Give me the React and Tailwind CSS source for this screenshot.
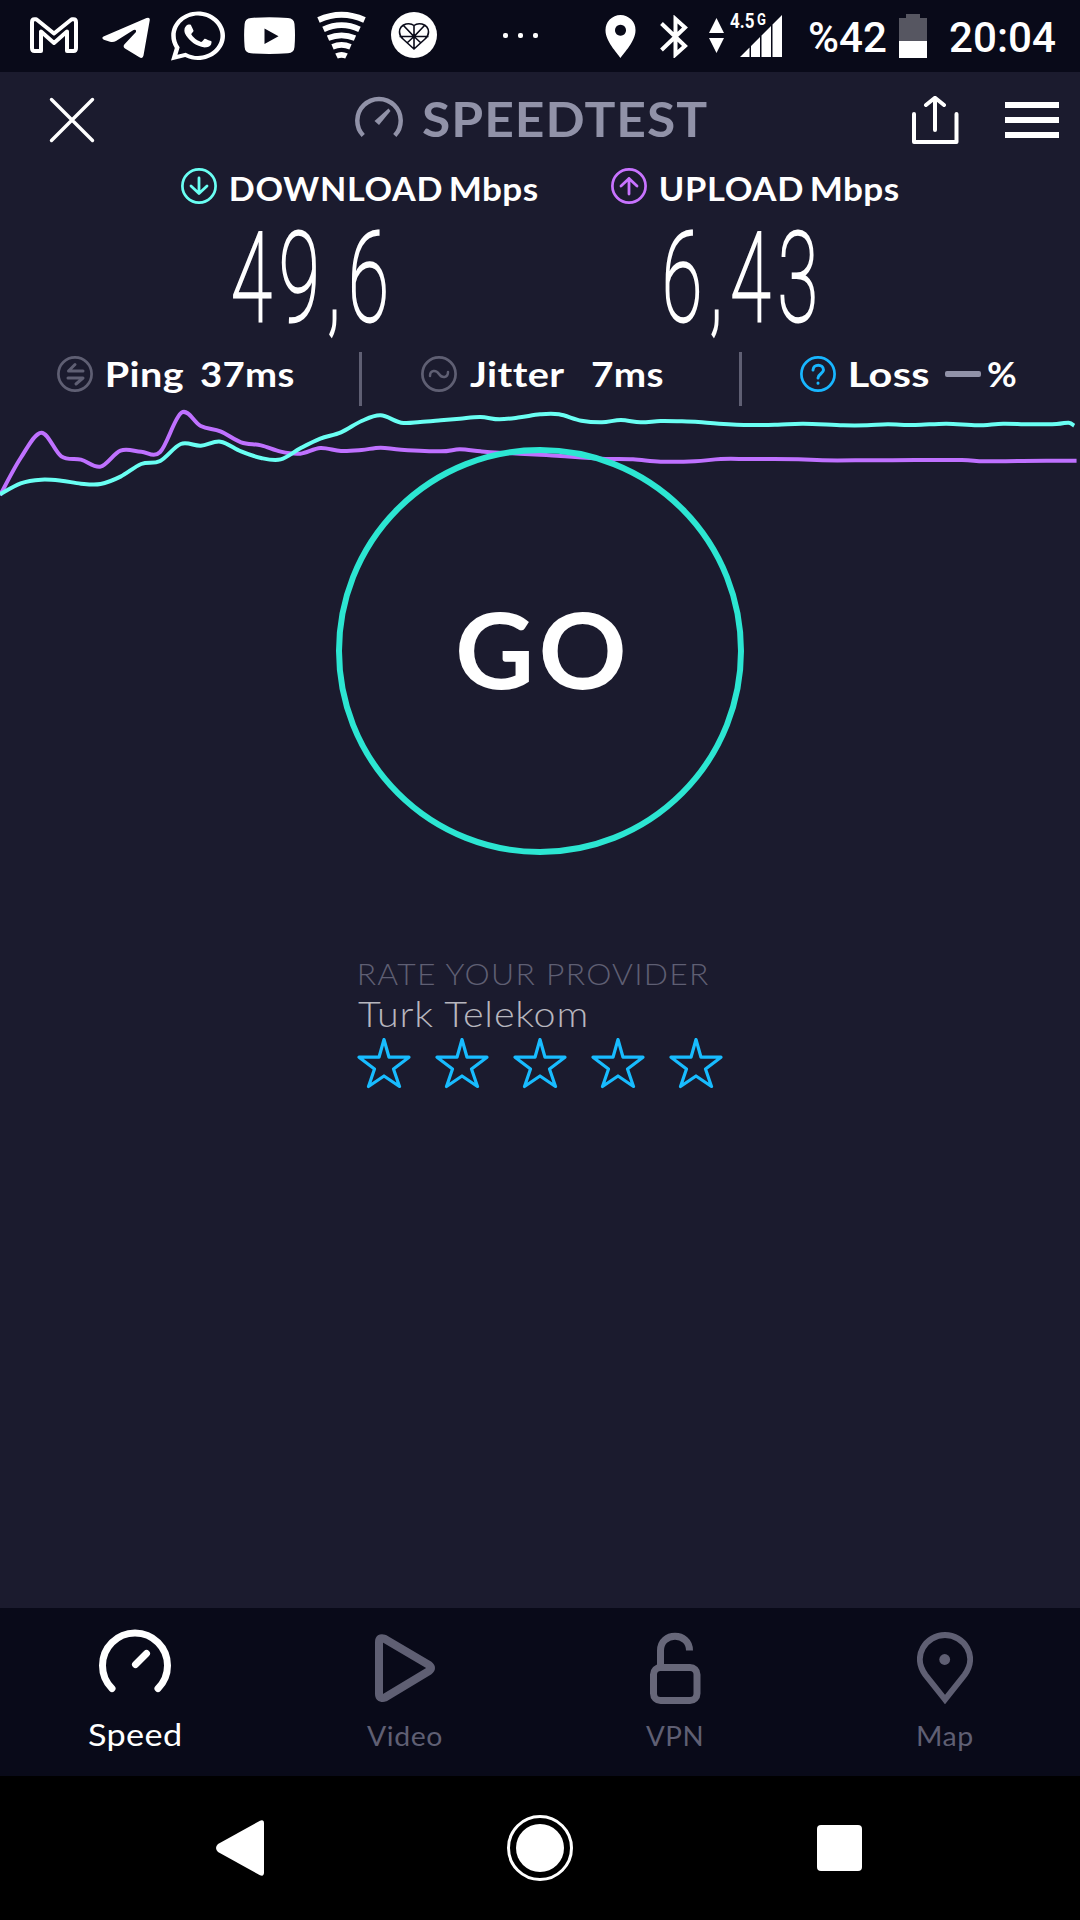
import React, { useLayoutEffect, useRef } from "react";
import { FaWhatsapp } from "react-icons/fa";

// Text whose ink fills its box: the box width sets the run length, the box bottom is the baseline.
function Label({ className = "", children }) {
  const box = useRef(null);
  const run = useRef(null);
  useLayoutEffect(() => {
    const cs = getComputedStyle(box.current);
    const ctx = document.createElement("canvas").getContext("2d");
    ctx.font = `${cs.fontWeight} ${cs.fontSize} ${cs.fontFamily}`;
    ctx.letterSpacing = cs.letterSpacing === "normal" ? "0px" : cs.letterSpacing;
    const m = ctx.measureText(run.current.textContent);
    const w = box.current.clientWidth;
    const h = box.current.clientHeight;
    const scale = w / (m.actualBoundingBoxRight + m.actualBoundingBoxLeft);
    const lineHeight = run.current.offsetHeight;
    const baseline = (lineHeight + m.fontBoundingBoxAscent - m.fontBoundingBoxDescent) / 2;
    run.current.style.transform = `translate(${m.actualBoundingBoxLeft * scale}px, ${h - baseline}px) scaleX(${scale})`;
  }, []);
  return (
    <div ref={box} className={`shrink-0 whitespace-pre ${className}`}>
      <span ref={run} className="block w-max origin-left leading-none">{children}</span>
    </div>
  );
}

function smooth(points) {
  let d = `M${points[0][0]} ${points[0][1]}`;
  for (let i = 0; i < points.length - 1; i++) {
    const a = points[i - 1] || points[i];
    const b = points[i];
    const c = points[i + 1];
    const e = points[i + 2] || c;
    d += ` C${b[0] + (c[0] - a[0]) / 6} ${b[1] + (c[1] - a[1]) / 6} ${c[0] - (e[0] - b[0]) / 6} ${c[1] - (e[1] - b[1]) / 6} ${c[0]} ${c[1]}`;
  }
  return d;
}

const upload = [
  [0, 466], [60, 354], [120, 278], [178, 349], [235, 359], [292, 380], [350, 332], [410, 335], [465, 336], [527, 218],
  [583, 258], [640, 274], [700, 307], [758, 316], [815, 335], [872, 341], [930, 324], [990, 333], [1050, 330], [1105, 323],
  [1165, 329], [1280, 334], [1335, 328], [1395, 334], [1450, 338], [1568, 344], [1628, 348], [1748, 356], [1838, 358],
  [1918, 365], [2018, 364], [2093, 357], [2178, 357], [2318, 358], [2388, 361], [2508, 361], [2658, 360], [2793, 360],
  [2858, 364], [2968, 363], [3126, 362],
];

const download = [
  [0, 463], [60, 430], [120, 419], [178, 422], [235, 431], [292, 432], [350, 410], [410, 372], [465, 363], [525, 312],
  [583, 317], [640, 305], [700, 334], [758, 354], [815, 358], [872, 325], [930, 296], [990, 277], [1050, 243], [1105, 226],
  [1165, 248], [1220, 246], [1280, 241], [1335, 236], [1395, 231], [1450, 238], [1510, 232], [1568, 223], [1623, 223],
  [1688, 242], [1748, 247], [1803, 240], [1860, 247], [1918, 243], [1978, 244], [2028, 246], [2088, 251], [2178, 255],
  [2258, 254], [2333, 251], [2448, 256], [2518, 256], [2578, 253], [2658, 255], [2748, 251], [2838, 256], [2913, 251],
  [2988, 253], [3068, 252], [3103, 248], [3119, 257],
];

function StatusBar() {
  return (
    <div className="flex h-[72px] items-start bg-[#090a19] pl-[30px] text-white">
      <svg className="mt-[17px] h-9 w-12" viewBox="0 0 48 36" fill="none" stroke="currentColor" strokeWidth="4" strokeLinejoin="round">
        <path d="M4.5 2.2h1.8L24 16.5 41.7 2.2h1.8q2.5 0 2.5 3V31q0 3-2.500 3H37V14.500L24 26 11 14.500V34H4.500Q2 34 2 31V5.200q0-3 2.500-3Z" />
      </svg>
      <svg className="mt-[17px] ml-6 h-[42px] w-12" viewBox="0 0 48 42" fill="currentColor">
        <path d="M1.500 19.500 44.500 1Q48.300-.3 47.700 3.500L41.500 38.500Q40.800 42.500 37 40L23 31.500Q20.500 29.700 22.500 27.300L34 15Q34.500 12 31.500 13L14 24Q11.500 25.500 8 24.800L1.800 22.800Q-1 21.200 1.500 19.500Z" />
      </svg>
      <FaWhatsapp className="mt-[8px] ml-[21px] h-[56px] w-[54px]" preserveAspectRatio="none" />
      <svg className="mt-[17px] ml-[19px] h-[37px] w-[51px]" viewBox="0 0 51 37" fill="currentColor">
        <path fillRule="evenodd" d="M7 1Q25-.6 44 1Q50 1.500 50.500 7Q51.500 18 50.500 30Q50 36 44 36.300Q25 37.600 7 36.300Q1 36 .6 30Q-.4 18 .6 7Q1 1.500 7 1ZM20.500 11.500V27L34.500 19.300Z" />
      </svg>
      <svg className="mt-[11px] ml-[22px] h-[49px] w-[49px]" viewBox="0 0 49 49" fill="none" stroke="currentColor" strokeWidth="5.800">
        <path d="M1.500 9Q24.500-1.500 47.500 9M6.500 18.300Q24.500 10 42.500 18.300M11 27.200Q24.500 21.500 38 27.200M15.500 35.800Q24.500 32 33.500 35.800M19.500 45Q24.500 42.600 29.500 45" />
      </svg>
      <svg className="mt-3 ml-[25px] h-[46px] w-[46px]" viewBox="0 0 46 46">
        <circle cx="23" cy="23" r="23" fill="currentColor" />
        <path d="M23 13.500Q26 11 31 12Q37.500 14 37.500 20Q37.500 24 34 27L23 37 12 27Q8.500 24 8.500 20Q8.500 14 15 12Q20 11 23 13.500ZV37M8.500 24.500H37.500M12.500 13.500 23 24.500 33.500 13.500M23 24.500 16 31M23 24.500 30 31" fill="none" stroke="#090a19" strokeWidth="1.600" />
      </svg>
      <div className="mt-[33px] ml-[66px] flex w-[35px] justify-between">
        <i className="size-[5px] rounded-[2px] bg-white" /><i className="size-[5px] rounded-[2px] bg-white" /><i className="size-[5px] rounded-[2px] bg-white" />
      </div>
      <svg className="mt-[15px] ml-[67px] h-[43px] w-[31px]" viewBox="0 0 31 43" fill="currentColor">
        <path fillRule="evenodd" d="M15.500 0A15 15 0 0 1 30.500 15.500C30.500 26 19 38 15.500 43C12 38 .5 26 .5 15.500A15 15 0 0 1 15.500 0ZM15.500 9.700a5.500 5.500 0 1 0 .01 0Z" />
      </svg>
      <svg className="mt-[15px] ml-6 h-[43px] w-7" viewBox="0 0 28 43" fill="none" stroke="currentColor" strokeWidth="4">
        <path d="M1.500 8.500 25 31 15.500 39.500V4L25 12.500 1.500 35" />
      </svg>
      <svg className="mt-[18px] ml-[21px] h-[35px] w-4" viewBox="0 0 16 35" fill="currentColor">
        <path d="M7.500 0 15 15H0ZM0 20H15L7.500 35Z" />
      </svg>
      <div className="relative mt-[15px] ml-[5px] h-[43px] w-[52px]">
        <svg className="ml-[10px] h-[42px] w-[42px]" viewBox="0 0 42 42" fill="currentColor">
          <path d="M0 42 9.500 32.500V42ZM11 31 20 22V42H11ZM21.500 20.500 31 11V42H21.500ZM32.500 9.500 42 0V42H32.500Z" />
        </svg>
        <div className="absolute -top-[1px] left-0 flex gap-[3px]">
          <Label className="h-[14px] w-[24px] font-[Roboto] text-[20px] font-bold">4.5</Label>
          <Label className="h-[11px] w-[9px] font-[Roboto] text-[16px] font-bold">G</Label>
        </div>
      </div>
      <Label className="mt-[22px] ml-7 h-[30px] w-[76px] font-[Roboto] text-[42px] font-medium">%42</Label>
      <svg className="mt-[14px] ml-[13px] h-11 w-7" viewBox="0 0 28 44">
        <path d="M7 0H21V4H28V27H0V4H7Z" fill="#565661" />
        <path d="M0 27H28V44H0Z" fill="#fff" />
      </svg>
      <Label className="mt-[22px] ml-[23px] h-[30px] w-[105px] font-[Roboto] text-[42px] font-medium">20:04</Label>
    </div>
  );
}

function Header() {
  return (
    <div className="flex h-[96px] items-start pl-[49px] text-white">
      <svg className="mt-[25px] h-[46px] w-[46px]" viewBox="0 0 46 46" stroke="currentColor" strokeWidth="3.400" strokeLinecap="round">
        <path d="M2.500 2.500 43.500 43.500M43.500 2.500 2.500 43.500" />
      </svg>
      <svg className="mt-6 ml-[260px] h-[42px] w-12" viewBox="0 0 48 42" fill="none" stroke="#9192a8" strokeWidth="4.500">
        <path d="M8.200 39.500A21.700 21.700 0 1 1 39.800 39.500" />
        <path d="M19.500 25 33.500 12.500 35.500 15 24 29Z" fill="#9192a8" stroke="none" />
      </svg>
      <Label className="mt-[31px] ml-5 h-[34px] w-[284px] text-[47px] font-bold tracking-[0.02em] text-[#9192a8]">SPEEDTEST</Label>
      <svg className="mt-6 ml-[205px] h-12 w-[48px]" viewBox="0 0 48 48" fill="none" stroke="currentColor" strokeWidth="4" strokeLinecap="round" strokeLinejoin="round">
        <path d="M2 18V46H44.500V18M23 34V2M14 9 23 1.800 32 9" />
      </svg>
      <div className="mt-[30px] ml-[45px] flex w-[54px] flex-col gap-[9px]">
        <i className="h-1.5 bg-white" /><i className="h-1.5 bg-white" /><i className="h-1.5 bg-white" />
      </div>
    </div>
  );
}

function Ring({ className, children }) {
  return (
    <svg className={`size-9 shrink-0 ${className}`} viewBox="0 0 36 36" fill="none" stroke="currentColor" strokeLinecap="round" strokeLinejoin="round">
      <circle cx="18" cy="18" r="16.600" strokeWidth="2.700" />
      {children}
    </svg>
  );
}

function Results() {
  return (
    <div className="h-[184px] text-white">
      <div className="flex h-[62px] items-start pl-[181px]">
        <Ring className="text-[#6afff3]"><path d="M18 10V25.500M10 18 18 25.500 26 18" strokeWidth="2.800" /></Ring>
        <Label className="mt-[9px] ml-[14px] h-[24px] w-[211px] text-[32px] font-bold tracking-[0.02em]">DOWNLOAD</Label>
        <Label className="mt-[9px] ml-[9px] h-[24px] w-[87px] text-[32px] font-bold tracking-[0.01em]">Mbps</Label>
        <Ring className="ml-[73px] text-[#c873ff]"><path d="M18 26V10.500M10 18 18 10.500 26 18" strokeWidth="2.800" /></Ring>
        <Label className="mt-[9px] ml-[14px] h-[24px] w-[142px] text-[32px] font-bold tracking-[0.02em]">UPLOAD</Label>
        <Label className="mt-[9px] ml-[9px] h-[24px] w-[87px] text-[32px] font-bold tracking-[0.01em]">Mbps</Label>
      </div>
      <div className="flex items-start pl-[234px]">
        <Label className="mt-px h-[90px] w-[151px] font-[Roboto] text-[125px] font-thin tracking-[0.1em] [-webkit-text-stroke:3px_white]">49,6</Label>
        <Label className="mt-px ml-[281px] h-[90px] w-[148px] font-[Roboto] text-[125px] font-thin tracking-[0.1em] [-webkit-text-stroke:3px_white]">6,43</Label>
      </div>
    </div>
  );
}

function Stats() {
  const text = "mt-[10px] h-[25px] text-[35px] font-bold tracking-[0.01em] [font-variant-ligatures:none]";
  return (
    <div className="flex h-[54px] items-start pl-[57px] text-white">
      <Ring className="mt-1 text-[#5f5f73]"><path d="M26 15H11.500L18 8.500M11 22H26L19 28" strokeWidth="3" /></Ring>
      <Label className={`${text} ml-[14px] w-[76px]`}>Ping</Label>
      <Label className={`${text} ml-[18px] w-[93px]`}>37ms</Label>
      <i className="ml-[65px] h-[54px] w-[3px] bg-[#5f5f73]" />
      <Ring className="mt-1 ml-[59px] text-[#5f5f73]"><path d="M9 20C9 14 15 13.500 18 18S27 22 27 16" strokeWidth="2.500" /></Ring>
      <Label className={`${text} ml-[13px] w-[94px]`}>Jitter</Label>
      <Label className={`${text} ml-[28px] w-[71px]`}>7ms</Label>
      <i className="ml-[76px] h-[54px] w-[3px] bg-[#5f5f73]" />
      <Ring className="mt-1 ml-[58px] text-[#18b6ff]"><path d="M13 14C13 7.500 23.500 7.500 23.500 14C23.500 17.500 18 18 18 22M18 27V27.200" strokeWidth="3" /></Ring>
      <Label className={`${text} ml-[14px] w-[79px]`}>Loss</Label>
      <i className="mt-[19px] ml-4 h-1.5 w-9 rounded-[2px] bg-[#9192a8]" />
      <Label className={`${text} ml-[7px] w-[28px]`}>%</Label>
    </div>
  );
}

function Rating() {
  return (
    <div className="mt-[109px] ml-[357px]">
      <Label className="ml-[3px] h-[21px] w-[350px] text-[29px] font-light tracking-[0.04em] text-[#5f5f73]">RATE YOUR PROVIDER</Label>
      <Label className="mt-[17px] ml-px h-[25px] w-[229px] text-[35px] font-light tracking-[0.02em] text-[#b7b6be]">Turk Telekom</Label>
      <div className="mt-[11px] flex gap-6">
        {[0, 1, 2, 3, 4].map((i) => (
          <svg key={i} className="h-[51px] w-[54px]" viewBox="0 0 54 51" fill="none" stroke="#18bcff" strokeWidth="3.200" strokeLinejoin="round">
            <path d="M27 1.500 32 19.200H52L36.500 31 42.500 48.500 27 38 11.500 48.500 17.500 31 2 19.200H22Z" />
          </svg>
        ))}
      </div>
    </div>
  );
}

function TabBar() {
  return (
    <div className="grid h-[168px] grid-cols-4 bg-[#090a19] text-[#5f5f73]">
      <div className="flex flex-col items-center pt-[21px] text-white">
        <svg className="h-[65px] w-[74px]" viewBox="0 0 74 65" fill="none" stroke="currentColor" strokeWidth="7" strokeLinecap="round">
          <path d="M14 59.500A32.500 32.500 0 1 1 60 59.500M37.500 35.500 48.500 24.500" />
        </svg>
        <Label className="mt-[31px] mr-[3px] h-[21px] w-[92px] text-[30px] tracking-[0.01em]">Speed</Label>
      </div>
      <div className="flex flex-col items-center pt-[26px]">
        <svg className="h-[68px] w-[60px]" viewBox="0 0 60 68" fill="none" stroke="currentColor" strokeWidth="8" strokeLinejoin="round">
          <path d="M4 8Q4 3 9 4.500Q10 5 54 31Q58 34 54 37L10 63.500Q4 65.500 4 60Z" />
        </svg>
        <Label className="mt-[25px] mr-px h-[19px] w-[75px] text-[27px] tracking-[0.02em]">Video</Label>
      </div>
      <div className="flex flex-col items-center pt-6">
        <svg className="h-[72px] w-[51px]" viewBox="0 0 51 72" fill="none" stroke="#676779" strokeWidth="7">
          <rect x="3.500" y="35.500" width="43.500" height="33" rx="7" />
          <path d="M10.500 35V18.500C10.500 -.5 39.500 -.5 39.500 18.500" />
        </svg>
        <Label className="mt-[23px] mr-[2px] h-[19px] w-[56px] text-[27px] tracking-[0.02em]">VPN</Label>
      </div>
      <div className="flex flex-col items-center pt-6">
        <svg className="h-[72px] w-[56px]" viewBox="0 0 56 72" fill="none" stroke="currentColor" strokeWidth="6">
          <path d="M28 67.500 8.500 43C-5.500 24 9 3 28 3S61.500 24 47.500 43Z" />
          <circle cx="27.700" cy="27.500" r="5.400" fill="currentColor" stroke="none" />
        </svg>
        <Label className="mt-[23px] mr-px h-[19px] w-[54px] text-[27px] tracking-[0.02em]">Map</Label>
      </div>
    </div>
  );
}

function SystemNav() {
  return (
    <div className="flex h-36 items-center bg-black pl-[216px]">
      <svg className="h-14 w-12" viewBox="0 0 48 56" fill="#fff">
        <path d="M2 24 44 .8Q48-.8 48 3.500V52.500Q48 56.800 44 55.200L2 32Q-2 28 2 24Z" />
      </svg>
      <div className="ml-[243px] flex size-[66px] items-center justify-center rounded-full border-[3px] border-white">
        <i className="size-12 rounded-full bg-white" />
      </div>
      <i className="ml-[244px] h-[46px] w-[45px] rounded-[4px] bg-white" />
    </div>
  );
}

export default function App() {
  return (
    <div className="flex h-[1920px] w-[1080px] flex-col overflow-hidden bg-[#1b1b2e] font-[Lato,sans-serif]">
      <StatusBar />
      <Header />
      <Results />
      <Stats />
      <svg className="h-[94px] w-[1080px] shrink-0" viewBox="0 198 3136 282" preserveAspectRatio="none" fill="none" strokeWidth="4">
        <path d={smooth(upload)} stroke="#bf71ff" vectorEffect="non-scaling-stroke" />
        <path d={smooth(download)} stroke="#6afff3" vectorEffect="non-scaling-stroke" />
      </svg>
      <div className="relative -mt-[53px] ml-[336px] flex size-[408px] shrink-0 justify-center rounded-full border-[6px] border-[#2ce6d2] pt-[160px] text-white">
        <Label className="h-[76px] w-[165px] text-[106px] font-bold tracking-[0.04em]">GO</Label>
      </div>
      <Rating />
      <div className="flex-1" />
      <TabBar />
      <SystemNav />
    </div>
  );
}
